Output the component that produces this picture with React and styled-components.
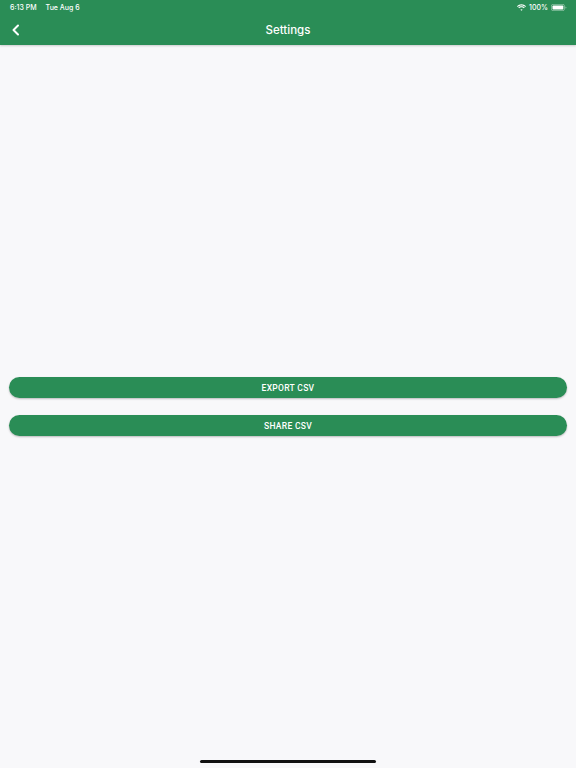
import styled, { createGlobalStyle } from "styled-components";

const GlobalStyle = createGlobalStyle`
  html, body {
    margin: 0;
    padding: 0;
    background: #f8f8fa;
    font-family: "Roboto", "Liberation Sans", sans-serif;
  }
`;

const Screen = styled.div`
  position: relative;
  width: 576px;
  height: 768px;
  display: flex;
  flex-direction: column;
  background: #f8f8fa;
  overflow: hidden;
`;

// green top area: status bar + navigation bar
const Header = styled.header`
  background: #2a8d56;
  height: 45px;
  box-shadow: 0 1px 2px rgba(0, 0, 0, 0.18);
  display: flex;
  flex-direction: column;
  color: #fff;
  z-index: 1;
`;

const StatusBar = styled.div`
  height: 14px;
  display: flex;
  align-items: center;
  justify-content: space-between;
  padding: 0 9px 0 10px;
  font-family: "Inter", "Liberation Sans", sans-serif;
  font-size: 7px;
  font-weight: 500;
`;

const StatusLeft = styled.div`
  display: flex;
  gap: 9px;
`;

const StatusRight = styled.div`
  display: flex;
  align-items: center;
  gap: 3px;
`;

const NavBar = styled.div`
  flex: 1;
  display: grid;
  grid-template-columns: 40px 1fr 40px;
  align-items: center;
  padding-top: 1px;
`;

const BackButton = styled.div`
  display: flex;
  align-items: center;
  padding-left: 11px;
`;

const Title = styled.h1`
  margin: 0;
  text-align: center;
  font-family: "Inter", "Liberation Sans", sans-serif;
  font-size: 11.5px;
  font-weight: 500;
`;

const Content = styled.main`
  flex: 1;
  display: flex;
  flex-direction: column;
  justify-content: center;
  gap: 17px;
  padding: 0 9px;
`;

const ActionButton = styled.button`
  height: 21px;
  border: none;
  border-radius: 11px;
  background: #2a8d56;
  color: #fff;
  font-family: "Roboto", "Liberation Sans", sans-serif;
  font-size: 8.5px;
  font-weight: 500;
  letter-spacing: 0.3px;
  box-shadow: 0 1px 2px rgba(0, 0, 0, 0.25);
  cursor: pointer;
`;

const HomeIndicator = styled.div`
  position: absolute;
  left: 200px;
  bottom: 5px;
  width: 176px;
  height: 3px;
  border-radius: 2px;
  background: #111;
`;

function Wifi() {
  return (
    <svg width="9" height="7" viewBox="0 0 18 13" fill="#fff">
      <path d="M9 2.5c2.9 0 5.5 1.1 7.4 3L18 3.9C15.7 1.5 12.5 0 9 0S2.3 1.5 0 3.9l1.6 1.6C3.5 3.6 6.1 2.5 9 2.5z" />
      <path d="M9 6.2c1.9 0 3.6.7 4.8 1.9l1.6-1.6C13.8 4.8 11.5 3.8 9 3.8S4.2 4.8 2.6 6.5l1.6 1.6C5.4 6.9 7.1 6.2 9 6.2z" />
      <path d="M9 9.8c.9 0 1.7.4 2.3 1L9 13l-2.3-2.2c.6-.6 1.4-1 2.3-1z" />
    </svg>
  );
}

function Battery() {
  return (
    <svg width="16" height="7" viewBox="0 0 32 14">
      <rect x="0.8" y="0.8" width="26" height="12.4" rx="3" fill="none" stroke="rgba(255,255,255,0.55)" strokeWidth="1.4" />
      <rect x="3" y="3" width="21.6" height="8" rx="1.5" fill="#fff" />
      <path d="M29 4.8v4.4c1.2-.4 1.8-1.2 1.8-2.2s-.6-1.8-1.8-2.2z" fill="rgba(255,255,255,0.55)" />
    </svg>
  );
}

export default function App() {
  return (
    <>
      <GlobalStyle />
      <Screen>
        <Header>
          <StatusBar>
            <StatusLeft>
              <span>6:13 PM</span>
              <span>Tue Aug 6</span>
            </StatusLeft>
            <StatusRight>
              <Wifi />
              <span>100%</span>
              <Battery />
            </StatusRight>
          </StatusBar>
          <NavBar>
            <BackButton>
              <svg width="9" height="12" viewBox="0 0 9 12">
                <path d="M7 1.5L2.5 6 7 10.5" fill="none" stroke="#fff" strokeWidth="2" strokeLinecap="round" strokeLinejoin="round" />
              </svg>
            </BackButton>
            <Title>Settings</Title>
            <div />
          </NavBar>
        </Header>
        <Content>
          <ActionButton>EXPORT CSV</ActionButton>
          <ActionButton>SHARE CSV</ActionButton>
        </Content>
        <HomeIndicator />
      </Screen>
    </>
  );
}
